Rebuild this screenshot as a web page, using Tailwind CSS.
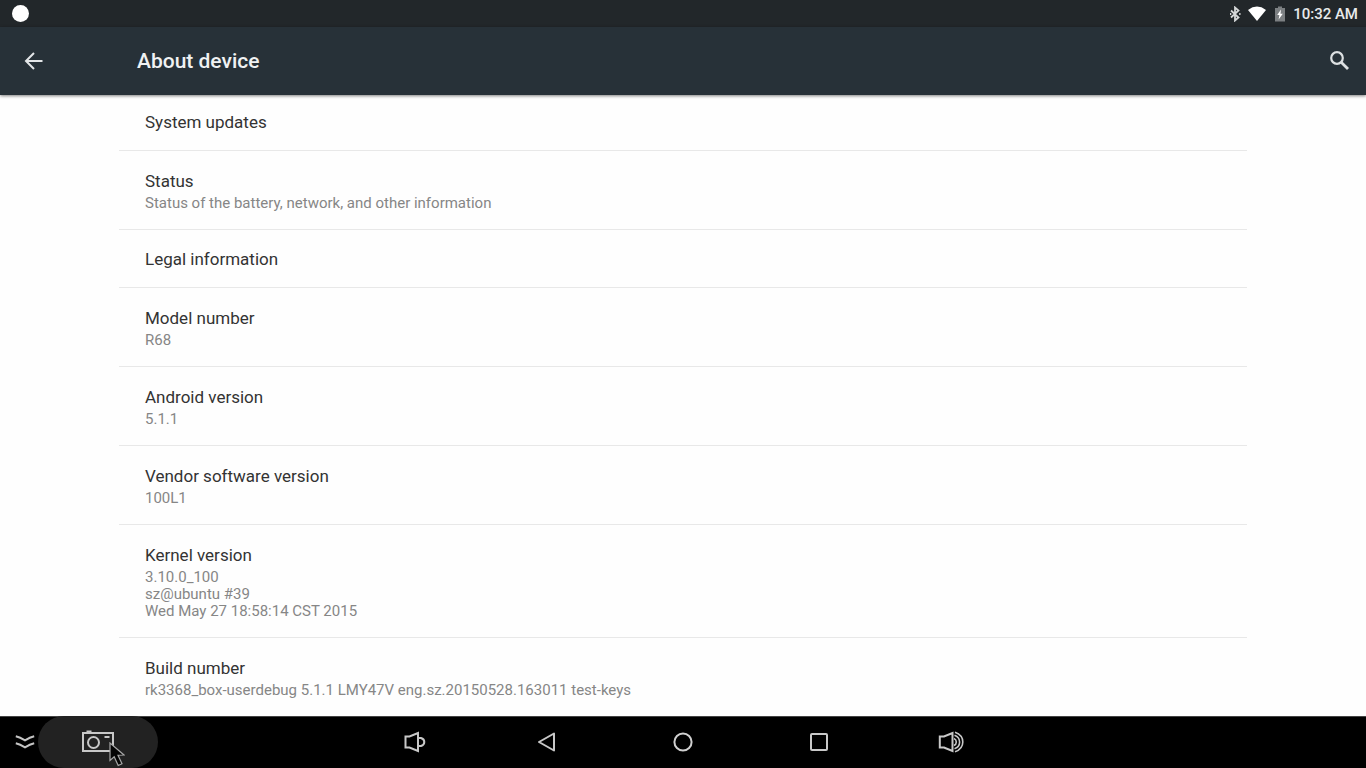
<!DOCTYPE html>
<html lang="en">
<head>
  <meta charset="utf-8">
  <meta name="viewport" content="width=device-width, initial-scale=1">
  <title>About device</title>
  <script src="https://cdn.jsdelivr.net/npm/@tailwindcss/browser@4"></script>
</head>
<body class="flex flex-col h-screen overflow-hidden bg-[#fefefe] font-[Roboto,sans-serif] text-[#333]">

  <!-- Status bar -->
  <div class="flex items-center justify-between h-[27px] shrink-0 pl-3 pr-2 bg-[#22272a] text-[#e8eaeb]">
    <span class="size-[17px] rounded-full bg-white"></span>
    <div class="flex items-center">
      <svg class="w-3 h-4 mr-[7px]" viewBox="0 0 12 16" fill="none" stroke="#d5d7d8" stroke-width="1.8">
        <path d="M2 4.5L9.5 11.5L6 14.5V1.5L9.5 4.5L2 11.5" />
        <path d="M1 8h1.3M10.2 8h1.3" />
      </svg>
      <svg class="w-[18px] h-4 mr-[9px]" viewBox="0 0 18 16" fill="#fff">
        <path d="M0 4Q9 -2.8 18 4L9 15Z" />
      </svg>
      <svg class="w-[10px] h-4 mr-2" viewBox="0 0 10 16">
        <path d="M0 2h3V0.5h4V2H10v13.5H0Z" fill="#7c8082" />
        <path d="M6 3.5L2.2 9h2.2l-.8 4.5L7.8 7.8H5.5Z" fill="#fff" />
      </svg>
      <span class="text-[15px] leading-5 font-medium">10:32 AM</span>
    </div>
  </div>

  <!-- App bar -->
  <header class="relative flex items-center h-[68px] shrink-0 px-4 bg-[#273138] text-[#f0f2f3] shadow-[0_1px_3px_rgba(0,0,0,0.5)]">
    <button type="button" aria-label="Back" class="flex items-center justify-center w-9 h-9">
      <svg class="size-5" viewBox="0 0 20 20" fill="none" stroke="#e3e6e8" stroke-width="2">
        <path d="M18.5 10H2.5M10 2L2 10l8 8" />
      </svg>
    </button>
    <h1 class="flex-1 ml-[85px] text-[21px] leading-7 font-medium">About device</h1>
    <button type="button" aria-label="Search" class="flex items-center justify-center w-[22px] h-9">
      <svg class="size-[22px]" viewBox="0 0 22 22" fill="none" stroke="#dde0e2">
        <circle cx="9" cy="8" r="5.8" stroke-width="2.2" />
        <path d="M13.2 12.2L20 19" stroke-width="2.8" />
      </svg>
    </button>
  </header>

  <!-- Preferences -->
  <main class="flex-1 min-h-0 overflow-hidden px-[119px]">
    <ul class="text-[17px] leading-[22px]">
      <li class="flex flex-col justify-center min-h-14 px-[26px] pb-0.5 border-b border-[#e8e8e8]">
        <h2>System updates</h2>
      </li>
      <li class="px-[26px] pt-[19px] pb-[17px] border-b border-[#e8e8e8]">
        <h2>Status</h2>
        <p class="mt-[3px] text-[15px] leading-[17px] text-[#868686]">Status of the battery, network, and other information</p>
      </li>
      <li class="flex flex-col justify-center min-h-[58px] px-[26px] border-b border-[#e8e8e8]">
        <h2>Legal information</h2>
      </li>
      <li class="px-[26px] pt-[19px] pb-[17px] border-b border-[#e8e8e8]">
        <h2>Model number</h2>
        <p class="mt-[3px] text-[15px] leading-[17px] text-[#868686]">R68</p>
      </li>
      <li class="px-[26px] pt-[19px] pb-[17px] border-b border-[#e8e8e8]">
        <h2>Android version</h2>
        <p class="mt-[3px] text-[15px] leading-[17px] text-[#868686]">5.1.1</p>
      </li>
      <li class="px-[26px] pt-[19px] pb-[17px] border-b border-[#e8e8e8]">
        <h2>Vendor software version</h2>
        <p class="mt-[3px] text-[15px] leading-[17px] text-[#868686]">100L1</p>
      </li>
      <li class="px-[26px] pt-[19px] pb-[17px] border-b border-[#e8e8e8]">
        <h2>Kernel version</h2>
        <p class="mt-[3px] text-[15px] leading-[17px] text-[#868686]">3.10.0_100<br>sz@ubuntu #39<br>Wed May 27 18:58:14 CST 2015</p>
      </li>
      <li class="px-[26px] pt-[19px] pb-[17px]">
        <h2>Build number</h2>
        <p class="mt-[3px] text-[15px] leading-[17px] text-[#868686]">rk3368_box-userdebug 5.1.1 LMY47V eng.sz.20150528.163011 test-keys</p>
      </li>
    </ul>
  </main>

  <!-- Navigation bar -->
  <nav class="grid grid-cols-[1fr_auto_1fr] h-[52px] shrink-0 bg-black shadow-[inset_0_1px_0_#444]">
    <div class="flex items-center">
      <button type="button" aria-label="Hide bar" class="flex items-center justify-center w-[38px] h-full pl-3">
        <svg class="w-5 h-4" viewBox="0 0 20 16" fill="none" stroke="#c4c4c4" stroke-width="2">
          <path d="M.8 2.2Q5 3.2 10 6.3Q15 3.2 19.2 2.2M.8 9.2Q5 10.2 10 13.3Q15 10.2 19.2 9.2" />
        </svg>
      </button>
      <button type="button" aria-label="Screenshot" class="relative flex items-center justify-center w-[120px] h-full rounded-full bg-[#222]">
        <svg class="w-[34px] h-6" viewBox="0 0 34 24" fill="none" stroke="#c8c8c8" stroke-width="2">
          <path d="M2 3H32V21H2Z" />
          <path d="M5.5 1.5h5M23.5 7h5" />
          <circle cx="12.5" cy="12.5" r="5.5" />
        </svg>
        <!-- Mouse pointer -->
        <svg class="absolute left-[71px] top-[26px] w-4 h-[25px]" viewBox="0 0 16 25" fill="#050505" stroke="#a8a8a8" stroke-width="1.2">
          <path d="M1 1V18.5L5.2 14.8L9.2 23.5L13 21.7L9 13.2L15 13Z" />
        </svg>
      </button>
    </div>
    <div class="flex">
      <button type="button" aria-label="Volume down" class="flex items-center justify-center w-32">
        <svg class="w-[22px] h-6" viewBox="0 0 22 24" fill="none" stroke="#c8c8c8" stroke-width="2">
          <path d="M1.5 6.5H5.5L14 3V21L5.5 17.5H1.5Z" />
          <path d="M15 8H17Q20.3 9 20.3 12T17 16H15" />
        </svg>
      </button>
      <button type="button" aria-label="Back" class="flex items-center justify-center w-[136px]">
        <svg class="w-[18px] h-5" viewBox="0 0 18 20" fill="none" stroke="#c8c8c8" stroke-width="2">
          <path d="M1 10L16 1.5V18.5Z" stroke-linejoin="round" />
        </svg>
      </button>
      <button type="button" aria-label="Home" class="flex items-center justify-center w-[136px]">
        <svg class="size-5" viewBox="0 0 20 20" fill="none" stroke="#d0d0d0" stroke-width="2">
          <circle cx="10" cy="10" r="8.6" />
        </svg>
      </button>
      <button type="button" aria-label="Recent apps" class="flex items-center justify-center w-[136px]">
        <svg class="size-[18px]" viewBox="0 0 18 18" fill="none" stroke="#c8c8c8" stroke-width="2">
          <rect x="1" y="1" width="16" height="16" rx="1" />
        </svg>
      </button>
      <button type="button" aria-label="Volume up" class="flex items-center justify-center w-32">
        <svg class="w-[26px] h-6" viewBox="0 0 26 24" fill="none" stroke="#c8c8c8" stroke-width="2">
          <path d="M1.8 6.5H6L14.5 3V21L6 17.5H1.8Z" />
          <path d="M16 8.5Q18.3 9.5 18.3 12T16 15.5" stroke-width="1.6" />
          <path d="M17 2.2Q24.8 5 24.8 12T17 21.8M16.5 5.2Q21.6 7 21.6 12T16.5 18.8" stroke-width="1.6" />
        </svg>
      </button>
    </div>
  </nav>

</body>
</html>
